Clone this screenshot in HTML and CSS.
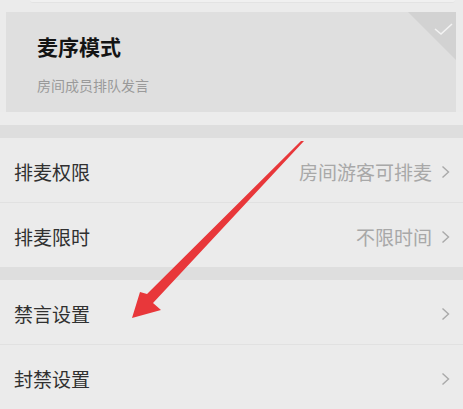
FILE: index.html
```html
<!DOCTYPE html>
<html lang="zh">
<head>
<meta charset="utf-8">
<link rel="stylesheet" href="styles.css">
</head>
<body>
<div class="page">
  <div class="top-strip"></div>
  <div class="mode-card">
    <div class="mode-title">麦序模式</div>
    <div class="mode-sub">房间成员排队发言</div>
    <svg class="corner" width="48" height="48" viewBox="0 0 48 48">
      <polygon points="0,0 48,0 48,48" fill="#d2d2d2"/>
      <polyline points="27,17 33,22 44,12" fill="none" stroke="#f3f3f3" stroke-width="1.6"/>
    </svg>
  </div>
  <div class="spacer"></div>
  <div class="band"></div>
  <div class="group">
    <div class="row">
      <span class="label">排麦权限</span>
      <span class="value">房间游客可排麦</span>
      <svg class="chev" width="9" height="14" viewBox="0 0 9 14"><polyline points="1.5,1.5 7.5,7 1.5,12.5" fill="none" stroke="#a9a9a9" stroke-width="1.4"/></svg>
    </div>
    <div class="row">
      <span class="label">排麦限时</span>
      <span class="value">不限时间</span>
      <svg class="chev" width="9" height="14" viewBox="0 0 9 14"><polyline points="1.5,1.5 7.5,7 1.5,12.5" fill="none" stroke="#a9a9a9" stroke-width="1.4"/></svg>
    </div>
  </div>
  <div class="band"></div>
  <div class="group">
    <div class="row">
      <span class="label">禁言设置</span>
      <span class="value"></span>
      <svg class="chev" width="9" height="14" viewBox="0 0 9 14"><polyline points="1.5,1.5 7.5,7 1.5,12.5" fill="none" stroke="#a9a9a9" stroke-width="1.4"/></svg>
    </div>
    <div class="row">
      <span class="label">封禁设置</span>
      <span class="value"></span>
      <svg class="chev" width="9" height="14" viewBox="0 0 9 14"><polyline points="1.5,1.5 7.5,7 1.5,12.5" fill="none" stroke="#a9a9a9" stroke-width="1.4"/></svg>
    </div>
  </div>
  <svg class="arrow" width="463" height="409" viewBox="0 0 463 409">
    <polygon points="304,141 153,303 161,310 132,318 140,292 147,294 301,141" fill="#e8373a"/>
  </svg>
</div>
</body>
</html>
```
FILE: styles.css
```css
html, body {
  margin: 0;
  padding: 0;
}
body {
  background: #ebebeb;
  font-family: "Noto Sans CJK SC", "Noto Sans", sans-serif;
  width: 463px;
  height: 409px;
  overflow: hidden;
}
.page {
  position: relative;
  width: 463px;
  height: 409px;
  overflow: hidden;
}
.top-strip {
  height: 2px;
  margin: 0 8px 0 30px;
  background: #f0f0f0;
  border-bottom: 1px solid #e3e3e3;
  border-radius: 0 0 3px 3px;
}
.mode-card {
  position: relative;
  margin: 9px 7px 0 6px;
  height: 100px;
  background: #dfdfdf;
  padding: 18px 0 0 31px;
  box-sizing: border-box;
  display: flex;
  flex-direction: column;
}
.mode-title {
  font-size: 21px;
  font-weight: 700;
  color: #141414;
  line-height: 32px;
}
.mode-sub {
  font-size: 14px;
  color: #9a9a9a;
  line-height: 20px;
  margin-top: 13px;
}
.corner {
  position: absolute;
  top: 0;
  right: 0;
}
.spacer {
  height: 13px;
  background: #ececec;
}
.band {
  height: 13px;
  background: #dedede;
}
.group {
  background: #ebebeb;
}
.row {
  height: 64px;
  display: flex;
  align-items: center;
  padding: 3px 13px 0 14px;
  box-sizing: border-box;
}
.row + .row {
  border-top: 1px solid #e1e1e1;
  height: 65px;
}
.label {
  font-size: 19px;
  color: #303030;
  flex: 1;
}
.value {
  font-size: 19px;
  color: #a8a8a8;
  margin-right: 9px;
}
.chev {
  display: block;
}
.arrow {
  position: absolute;
  left: 0;
  top: 0;
  pointer-events: none;
}
```
